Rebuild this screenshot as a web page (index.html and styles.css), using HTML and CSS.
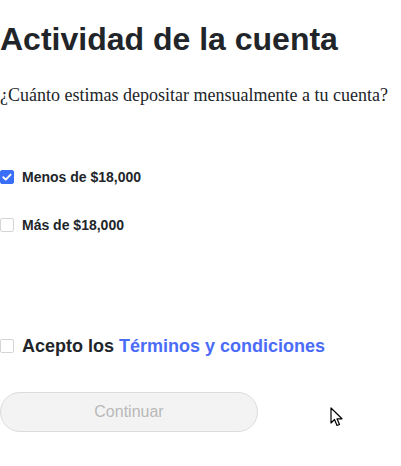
FILE: index.html
```html
<!DOCTYPE html>
<html lang="es">
<head>
<meta charset="utf-8">
<link rel="stylesheet" href="styles.css">
</head>
<body>
<main class="page">
  <h1 class="title">Actividad de la cuenta</h1>
  <p class="question">¿Cuánto estimas depositar mensualmente a tu cuenta?</p>
  <div class="options">
    <label class="option"><span class="box checked"><svg viewBox="0 0 14 14" width="14" height="14"><path d="M3.3 7.2 L5.8 9.6 L10.6 4.6" fill="none" stroke="#fff" stroke-width="1.9" stroke-linecap="round" stroke-linejoin="round"/></svg></span><span class="opt-text">Menos de $18,000</span></label>
    <label class="option"><span class="box"></span><span class="opt-text">Más de $18,000</span></label>
  </div>
  <label class="terms"><span class="box"></span><span class="terms-text">Acepto los <a class="link" href="#">Términos y condiciones</a></span></label>
  <button class="btn" disabled>Continuar</button>
</main>
<svg class="cursor" width="14" height="22" viewBox="0 0 14 22"><path d="M1 1 L1 16 L4.5 12.5 L7 18.5 L9.5 17.5 L7 11.8 L12 11.8 Z" fill="#fff" stroke="#000" stroke-width="1.2" stroke-linejoin="round"/></svg>
</body>
</html>
```
FILE: styles.css
```css
html, body { margin: 0; padding: 0; background: #fff; }
body { position: relative; width: 401px; height: 466px; overflow: hidden; }
.page { display: flex; flex-direction: column; align-items: flex-start; }
.title {
  font-family: "Liberation Sans", Arial, sans-serif;
  font-weight: 700;
  font-size: 32px;
  color: #212529;
  margin: 21px 0 0;
  line-height: 37px;
}
.question {
  font-family: "Liberation Serif", "Times New Roman", serif;
  font-size: 18px;
  color: #212529;
  margin: 27px 0 0;
  line-height: 21px;
}
.options { display: flex; flex-direction: column; gap: 30px; margin-top: 62px; }
.option { display: flex; align-items: center; gap: 8px; }
.box {
  width: 14px; height: 14px; box-sizing: border-box;
  border: 1px solid #d5d5d5; border-radius: 2px; background: #fff;
  display: flex; flex-shrink: 0;
}
.box.checked { background: #3b6ef6; border-color: #3b6ef6; }
.box.checked svg { display: block; margin: -1px; }
.opt-text {
  font-family: "Liberation Sans", Arial, sans-serif;
  font-weight: 700; font-size: 14px; color: #212529; line-height: 18px;
}
.terms { display: flex; align-items: center; gap: 8px; margin-top: 101px; }
.terms-text {
  font-family: "Liberation Sans", Arial, sans-serif;
  font-weight: 700; font-size: 18px; color: #212529; line-height: 22px;
}
.link { color: #4b6cf7; text-decoration: none; }
.btn {
  margin-top: 35px;
  width: 258px; height: 40px; box-sizing: border-box;
  border: 1px solid #dcdcdc; border-radius: 20px; background: #f3f3f3;
  font-family: "Liberation Sans", Arial, sans-serif; font-size: 16px; color: #b9b9b9;
  padding: 0;
}
.cursor { position: absolute; left: 330px; top: 407px; }
```
